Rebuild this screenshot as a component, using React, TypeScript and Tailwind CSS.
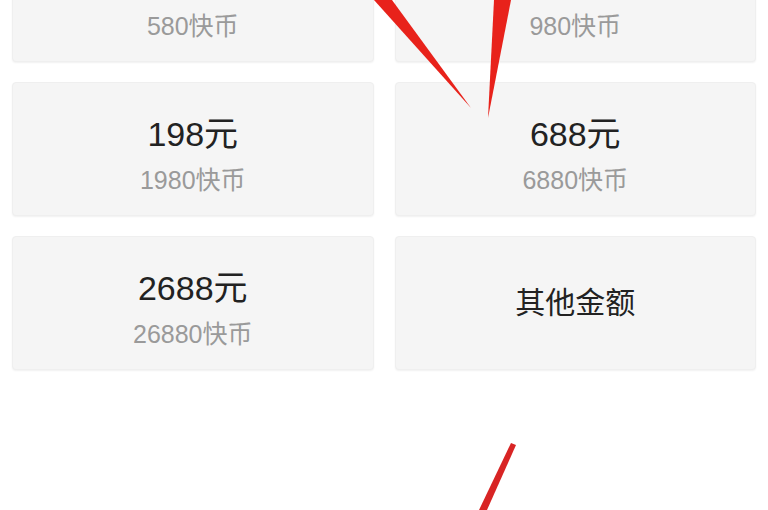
import React from "react";

type Option = {
  price?: string;
  coins?: string;
  label?: string;
};

const options: Option[] = [
  { price: "58元", coins: "580快币" },
  { price: "98元", coins: "980快币" },
  { price: "198元", coins: "1980快币" },
  { price: "688元", coins: "6880快币" },
  { price: "2688元", coins: "26880快币" },
  { label: "其他金额" },
];

function OptionCard({ option }: { option: Option }) {
  if (option.label) {
    return (
      <div className="h-[134px] rounded-[4px] bg-[#f5f5f5] border border-[#efefef] shadow-[0_1px_2px_rgba(0,0,0,0.06)] flex items-center justify-center">
        <span className="text-[30px] leading-[40px] text-[#222]">{option.label}</span>
      </div>
    );
  }
  return (
    <div className="h-[134px] rounded-[4px] bg-[#f5f5f5] border border-[#efefef] shadow-[0_1px_2px_rgba(0,0,0,0.06)] flex flex-col items-center pt-[30px]">
      <span className="text-[34px] leading-[42px] text-[#222]">{option.price}</span>
      <span className="mt-[10px] text-[25px] leading-[30px] text-[#9a9a9a]">{option.coins}</span>
    </div>
  );
}

export default function App() {
  return (
    <div
      className="relative w-[768px] h-[510px] overflow-hidden bg-white"
      style={{ fontFamily: '"Liberation Sans", "Noto Sans CJK SC", sans-serif' }}
    >
      <div className="grid grid-cols-2 gap-x-[21px] gap-y-[20px] px-[12px] mt-[-72px]">
        {options.map((o, i) => (
          <OptionCard key={i} option={o} />
        ))}
      </div>

      {/* red annotation arrows drawn over the screenshot */}
      <svg className="absolute inset-0 pointer-events-none" width="768" height="510" viewBox="0 0 768 510">
        <polygon points="374,0 392,0 471,108" fill="#e8221b" />
        <polygon points="494,0 511,0 488,118" fill="#e8221b" />
        <polygon points="511,443 516,445 487,510 479,510" fill="#d82424" />
      </svg>
    </div>
  );
}
